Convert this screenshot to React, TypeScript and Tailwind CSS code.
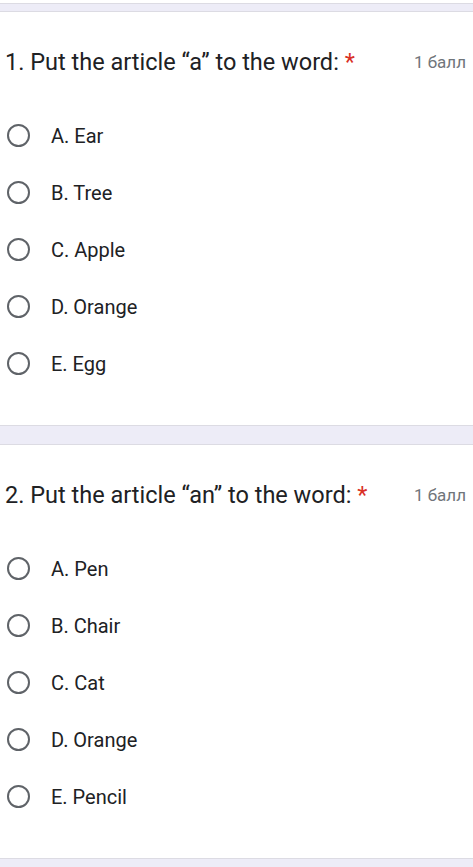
import React from "react";

const questions = [
  { title: "1. Put the article “a” to the word:", options: ["A. Ear", "B. Tree", "C. Apple", "D. Orange", "E. Egg"] },
  { title: "2. Put the article “an” to the word:", options: ["A. Pen", "B. Chair", "C. Cat", "D. Orange", "E. Pencil"] },
];

function Band({ className }: { className: string }) {
  return <div className={`border-y border-[#dcdbe3] bg-[#edecf7] ${className}`} />;
}

function Card({ title, options }: { title: string; options: string[] }) {
  return (
    <div className="bg-white pt-[37px] pb-[33px]">
      <div className="flex h-[28px] items-center justify-between pl-[5px] pr-[7px]">
        <div className="whitespace-nowrap text-[23.5px] text-[#202124]" style={{ fontFamily: "Roboto, sans-serif" }}>
          {title} <span className="text-[#d93025]">*</span>
        </div>
        <div className="whitespace-nowrap text-[17px] text-[#70757a]" style={{ fontFamily: "Roboto, sans-serif" }}>1 балл</div>
      </div>
      <div className="mt-[30px] flex flex-col">
        {options.map((o) => (
          <div key={o} className="flex h-[57px] items-center pl-[7px]">
            <div className="h-[23px] w-[23px] rounded-full border-[2.5px] border-[#5f6368]" />
            <span className="ml-[21px] text-[20px] text-[#202124]" style={{ fontFamily: "Roboto, sans-serif" }}>{o}</span>
          </div>
        ))}
      </div>
    </div>
  );
}

export default function App() {
  return (
    <div className="h-[867px] w-[473px] overflow-hidden bg-white" style={{ fontFamily: "Roboto, sans-serif" }}>
      <div className="h-[3px] bg-white" />
      <Band className="h-[9px]" />
      <Card {...questions[0]} />
      <Band className="h-[20px]" />
      <Card {...questions[1]} />
      <Band className="h-[12px]" />
    </div>
  );
}
